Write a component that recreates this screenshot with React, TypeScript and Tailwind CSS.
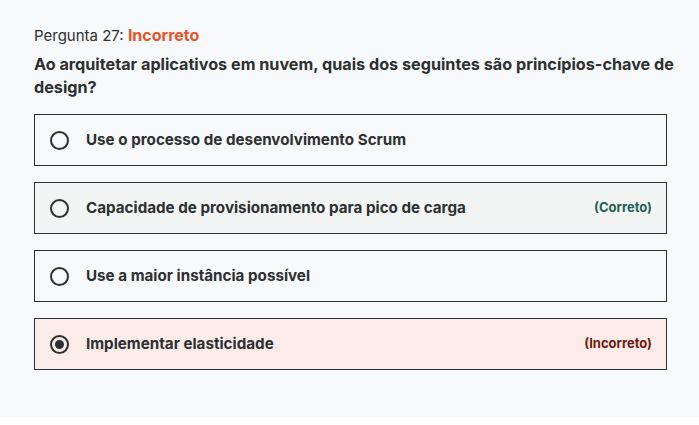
import React from "react";

type Opt = { text: string; state?: "correct" | "incorrect"; checked?: boolean };

const options: Opt[] = [
  { text: "Use o processo de desenvolvimento Scrum" },
  { text: "Capacidade de provisionamento para pico de carga", state: "correct" },
  { text: "Use a maior instância possível" },
  { text: "Implementar elasticidade", state: "incorrect", checked: true },
];

export default function App() {
  return (
    <div className="w-[699px] h-[425px] bg-white" style={{ fontFamily: "Inter, 'Noto Sans', sans-serif" }}>
      <div className="h-[417px] bg-[#f7f9fa] pt-[26px] pl-[34px] pr-[32px]">
        <div className="h-[18px] text-[15px] leading-[18px] text-[#2d2f31]">
          Pergunta 27: <span className="text-[16px] leading-[18px] font-bold text-[#e8532c]">Incorreto</span>
        </div>
        <div className="mt-[9px] mr-[-20px] text-[16.2px] leading-[23px] font-bold text-[#2d2f31]">
          Ao arquitetar aplicativos em nuvem, quais dos seguintes são princípios-chave de design?
        </div>
        <div className="mt-[15px] flex flex-col gap-[16px]">
          {options.map((o, i) => (
            <div
              key={i}
              className={
                "h-[52px] border border-[#2d2f31] flex items-center pl-[15px] pr-[14px] " +
                (o.state === "correct" ? "bg-[#f2f5f4]" : o.state === "incorrect" ? "bg-[#fbece9]" : "bg-[#f7f9fa]")
              }
            >
              <div className="w-[19px] h-[19px] rounded-full border-2 border-[#2d2f31] flex items-center justify-center shrink-0">
                {o.checked && <div className="w-[9px] h-[9px] rounded-full bg-[#2d2f31]" />}
              </div>
              <div className="ml-[17px] text-[15.2px] font-bold text-[#2d2f31] flex-1">{o.text}</div>
              {o.state === "correct" && (
                <div className="text-[13px] font-bold text-[#1e6055]">(Correto)</div>
              )}
              {o.state === "incorrect" && (
                <div className="text-[13px] font-bold text-[#6e1a0e]">(Incorreto)</div>
              )}
            </div>
          ))}
        </div>
      </div>
    </div>
  );
}
